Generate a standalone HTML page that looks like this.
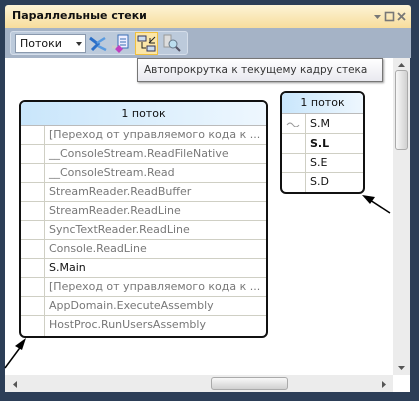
<!DOCTYPE html>
<html><head><meta charset="utf-8"><style>
*{margin:0;padding:0;box-sizing:border-box}
body{width:419px;height:401px;background:#2c3e57;position:relative;overflow:hidden;font-family:"DejaVu Sans","Liberation Sans",sans-serif}
.abs{position:absolute}
#title{left:5px;top:5px;width:406px;height:23px;background:linear-gradient(#fdf3d6,#f7dd9c);border-radius:3px 3px 0 0}
#title span{position:absolute;left:7px;top:4px;font-size:11px;font-weight:bold;color:#111;white-space:nowrap}
#tb{left:5px;top:28px;width:406px;height:30px;background:#a5b3c6}
#tbin{left:10px;top:31px;width:178px;height:24px;background:#bccadb;border:1px solid #d5deea;border-radius:3px}
#combo{left:15px;top:34px;width:71px;height:19px;background:#fff;border:1px solid #8a99ad;font-size:11px;padding:2px 0 0 4px;color:#111}
#content{left:5px;top:58px;width:388px;height:317px;background:#fff}
#vs{left:393px;top:58px;width:17px;height:317px;background:#ececec}
#hs{left:5px;top:375px;width:388px;height:17px;background:#ececec}
#corner{left:393px;top:375px;width:17px;height:17px;background:#fff}
.box{background:#fff;border:2px solid #111;border-radius:6px;overflow:hidden}
.hdr{background:linear-gradient(90deg,#c9e6fb,#eef7fe);text-align:center;font-size:11px;color:#111;border-bottom:1px solid #bbb}
.row{border-bottom:1px solid #cfcfc4;font-size:11px;color:#777;white-space:nowrap;position:relative}
.row .g{position:absolute;left:0;top:0;bottom:0;border-right:1px solid #cfcfc4}
#tip{left:137px;top:58px;width:246px;height:24px;background:linear-gradient(#fff,#e9e9ef);border:1px solid #767676;font-size:10.5px;color:#333;padding:5px 0 0 6px;box-shadow:1px 1px 2px #999;white-space:nowrap;overflow:hidden}
</style></head><body>
<div id="title" class="abs"><span>Параллельные стеки</span>
<svg class="abs" style="right:3px;top:6px" width="36" height="12"><path d="M2 4h7l-3.5 4z" fill="#777"/><rect x="13.5" y="1.5" width="8" height="8" fill="none" stroke="#777" stroke-width="1.6"/><path d="M26 2l7 7M33 2l-7 7" stroke="#777" stroke-width="1.8"/></svg></div>
<div id="tb" class="abs"></div>
<div id="tbin" class="abs"></div>
<div id="combo" class="abs">Потоки<svg class="abs" style="right:3px;top:7px" width="6" height="4"><path d="M0 0h6l-3 4z" fill="#333"/></svg></div>
<svg class="abs" style="left:88px;top:34px" width="20" height="20"><path d="M2 4l8 6l-6 6" stroke="#2a6fc9" stroke-width="3" fill="none"/><path d="M9 9l8-5M10 12l8 4" stroke="#5a9be0" stroke-width="2.5"/></svg>
<svg class="abs" style="left:111px;top:33px" width="20" height="20"><rect x="7" y="2" width="10" height="13" fill="#eef" stroke="#3a6fb5"/><path d="M9 6h6M9 9h6M9 12h6" stroke="#3a6fb5"/><path d="M8 12l4 4l-4 4l-4-4z" fill="#c040c0"/><path d="M1 14h4" stroke="#ccc" stroke-width="3"/></svg>
<div class="abs" style="left:135px;top:32px;width:23px;height:23px;background:#fbe6a8;border:1px solid #f0c040"></div>
<svg class="abs" style="left:137px;top:34px" width="20" height="20"><rect x="1" y="2" width="8" height="5" fill="#cde" stroke="#335"/><rect x="10" y="12" width="8" height="5" fill="#cde" stroke="#335"/><path d="M5 8v6h4M12 9l6-6M13 4v5h5" stroke="#222" fill="none"/></svg>
<svg class="abs" style="left:162px;top:34px" width="20" height="20"><rect x="2" y="1" width="7" height="12" fill="#ddd" stroke="#999"/><circle cx="11" cy="10" r="4" fill="#bde" stroke="#678"/><path d="M14 13l4 4" stroke="#556" stroke-width="2"/></svg>
<div id="content" class="abs"></div>
<div id="vs" class="abs"><div class="abs" style="left:2px;top:12px;width:13px;height:80px;background:linear-gradient(90deg,#f8f8f8,#d0d0d0);border:1px solid #aaa;border-radius:3px"></div><svg class="abs" style="left:5px;top:5px" width="7" height="4"><path d="M0 4h7l-3.5-4z" fill="#555"/></svg><svg class="abs" style="left:5px;top:308px" width="7" height="4"><path d="M0 0h7l-3.5 4z" fill="#555"/></svg></div>
<div id="hs" class="abs"><div class="abs" style="left:206px;top:2px;width:77px;height:13px;background:linear-gradient(#f8f8f8,#d0d0d0);border:1px solid #aaa;border-radius:3px"></div><svg class="abs" style="left:8px;top:6px" width="4" height="7"><path d="M4 0v7L0 3.5z" fill="#555"/></svg><svg class="abs" style="left:377px;top:6px" width="4" height="7"><path d="M0 0v7l4-3.5z" fill="#555"/></svg></div>
<div id="corner" class="abs"></div>

<div class="abs box" style="left:19px;top:100px;width:249px;height:238px">
<div class="hdr" style="height:24px;line-height:23px">1 поток</div>
<div style="font-size:11px">
<div class="row" style="height:19px;line-height:18px;padding-left:28px"><span class="g" style="width:24px"></span>[Переход от управляемого кода к ...</div>
<div class="row" style="height:19px;line-height:18px;padding-left:28px"><span class="g" style="width:24px"></span>__ConsoleStream.ReadFileNative</div>
<div class="row" style="height:19px;line-height:18px;padding-left:28px"><span class="g" style="width:24px"></span>__ConsoleStream.Read</div>
<div class="row" style="height:19px;line-height:18px;padding-left:28px"><span class="g" style="width:24px"></span>StreamReader.ReadBuffer</div>
<div class="row" style="height:19px;line-height:18px;padding-left:28px"><span class="g" style="width:24px"></span>StreamReader.ReadLine</div>
<div class="row" style="height:19px;line-height:18px;padding-left:28px"><span class="g" style="width:24px"></span>SyncTextReader.ReadLine</div>
<div class="row" style="height:19px;line-height:18px;padding-left:28px"><span class="g" style="width:24px"></span>Console.ReadLine</div>
<div class="row" style="height:19px;line-height:18px;padding-left:28px;color:#111"><span class="g" style="width:24px"></span>S.Main</div>
<div class="row" style="height:19px;line-height:18px;padding-left:28px"><span class="g" style="width:24px"></span>[Переход от управляемого кода к ...</div>
<div class="row" style="height:19px;line-height:18px;padding-left:28px"><span class="g" style="width:24px"></span>AppDomain.ExecuteAssembly</div>
<div class="row" style="height:20px;line-height:18px;padding-left:28px;border-bottom:none"><span class="g" style="width:24px"></span>HostProc.RunUsersAssembly</div>
</div></div>

<div class="abs box" style="left:280px;top:91px;width:85px;height:103px">
<div class="hdr" style="height:21px;line-height:20px">1 поток</div>
<div class="row" style="height:20px;line-height:19px;padding-left:28px;color:#111"><span class="g" style="width:24px"></span><svg class="abs" style="left:4px;top:7px" width="16" height="6"><path d="M1 4q3-4 6 0t6 0" stroke="#999" fill="none"/></svg>S.M</div>
<div class="row" style="height:20px;line-height:19px;padding-left:28px;color:#111;font-weight:bold"><span class="g" style="width:24px"></span>S.L</div>
<div class="row" style="height:19px;line-height:18px;padding-left:28px;color:#111"><span class="g" style="width:24px"></span>S.E</div>
<div class="row" style="height:19px;line-height:18px;padding-left:28px;color:#111;border-bottom:none"><span class="g" style="width:24px"></span>S.D</div>
</div>

<div id="tip" class="abs">Автопрокрутка к текущему кадру стека</div>

<svg class="abs" style="left:0;top:0" width="419" height="401"><path d="M5 368L22 345" stroke="#000" stroke-width="1.5"/><path d="M26 338l-11 8l7 4z" fill="#000"/><path d="M390 213L370 200" stroke="#000" stroke-width="1.5"/><path d="M362 195l13 2l-5 7z" fill="#000"/></svg>
</body></html>
